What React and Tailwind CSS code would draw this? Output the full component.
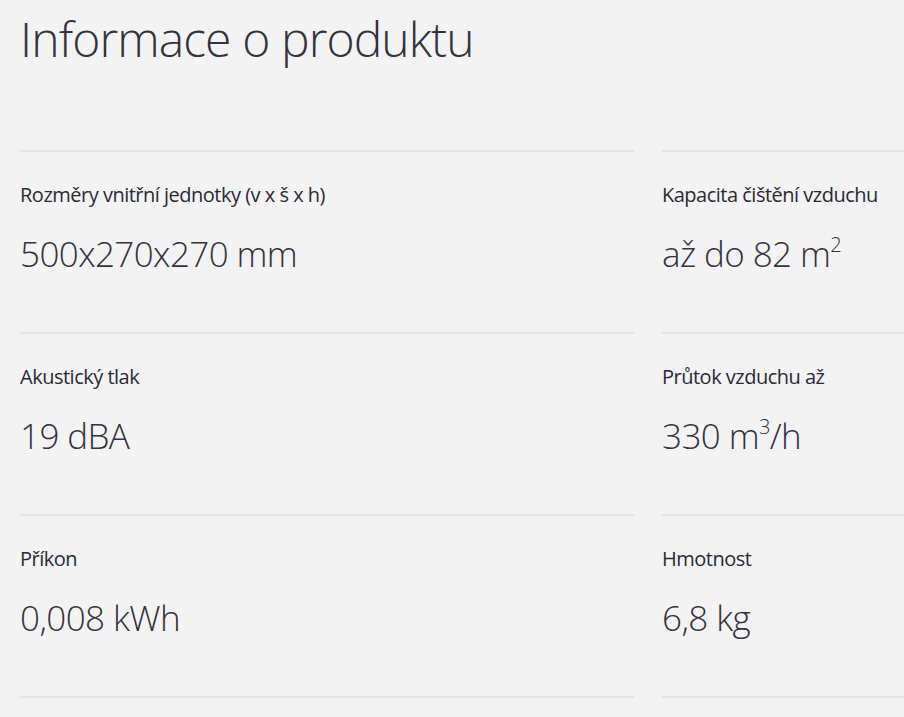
import React from 'react';

const Sup = ({ children }) => (
  <span className="relative -top-[15px] text-[20px] leading-none">{children}</span>
);

const specs = [
  [
    { label: 'Rozměry vnitřní jednotky (v x š x h)', value: '500x270x270 mm' },
    { label: 'Kapacita čištění vzduchu', value: <>až do 82 m<Sup>2</Sup></> },
  ],
  [
    { label: 'Akustický tlak', value: '19 dBA' },
    { label: 'Průtok vzduchu až', value: <>330 m<Sup>3</Sup>/h</> },
  ],
  [
    { label: 'Příkon', value: '0,008 kWh' },
    { label: 'Hmotnost', value: '6,8 kg' },
  ],
];

function SpecCell({ label, value }) {
  return (
    <div className="border-t-2 border-[#e5e5e5] h-[182px] pt-[31px]">
      <div className="text-[20px] leading-[24px] tracking-[-0.5px] text-[#2a2a36]">{label}</div>
      <div className="mt-[25px] text-[35px] leading-[44px] tracking-[-0.6px] font-light text-[#33333f]">{value}</div>
    </div>
  );
}

export default function App() {
  return (
    <div className="w-[904px] h-[717px] overflow-hidden bg-[#f3f3f3] font-['Open_Sans',sans-serif]">
      <div className="pl-5 w-[1300px]">
        <div className="h-[150px] pt-[9px]">
          <h1 className="text-[48px] leading-[60px] tracking-[-0.9px] font-light text-[#33333f]">Informace o produktu</h1>
        </div>
        <div className="grid grid-cols-[614px_614px] gap-x-[28px]">
          {specs.map((row, i) => (
            <React.Fragment key={i}>
              <SpecCell {...row[0]} />
              <SpecCell {...row[1]} />
            </React.Fragment>
          ))}
          <div className="border-t-2 border-[#e5e5e5]" />
          <div className="border-t-2 border-[#e5e5e5]" />
        </div>
      </div>
    </div>
  );
}
